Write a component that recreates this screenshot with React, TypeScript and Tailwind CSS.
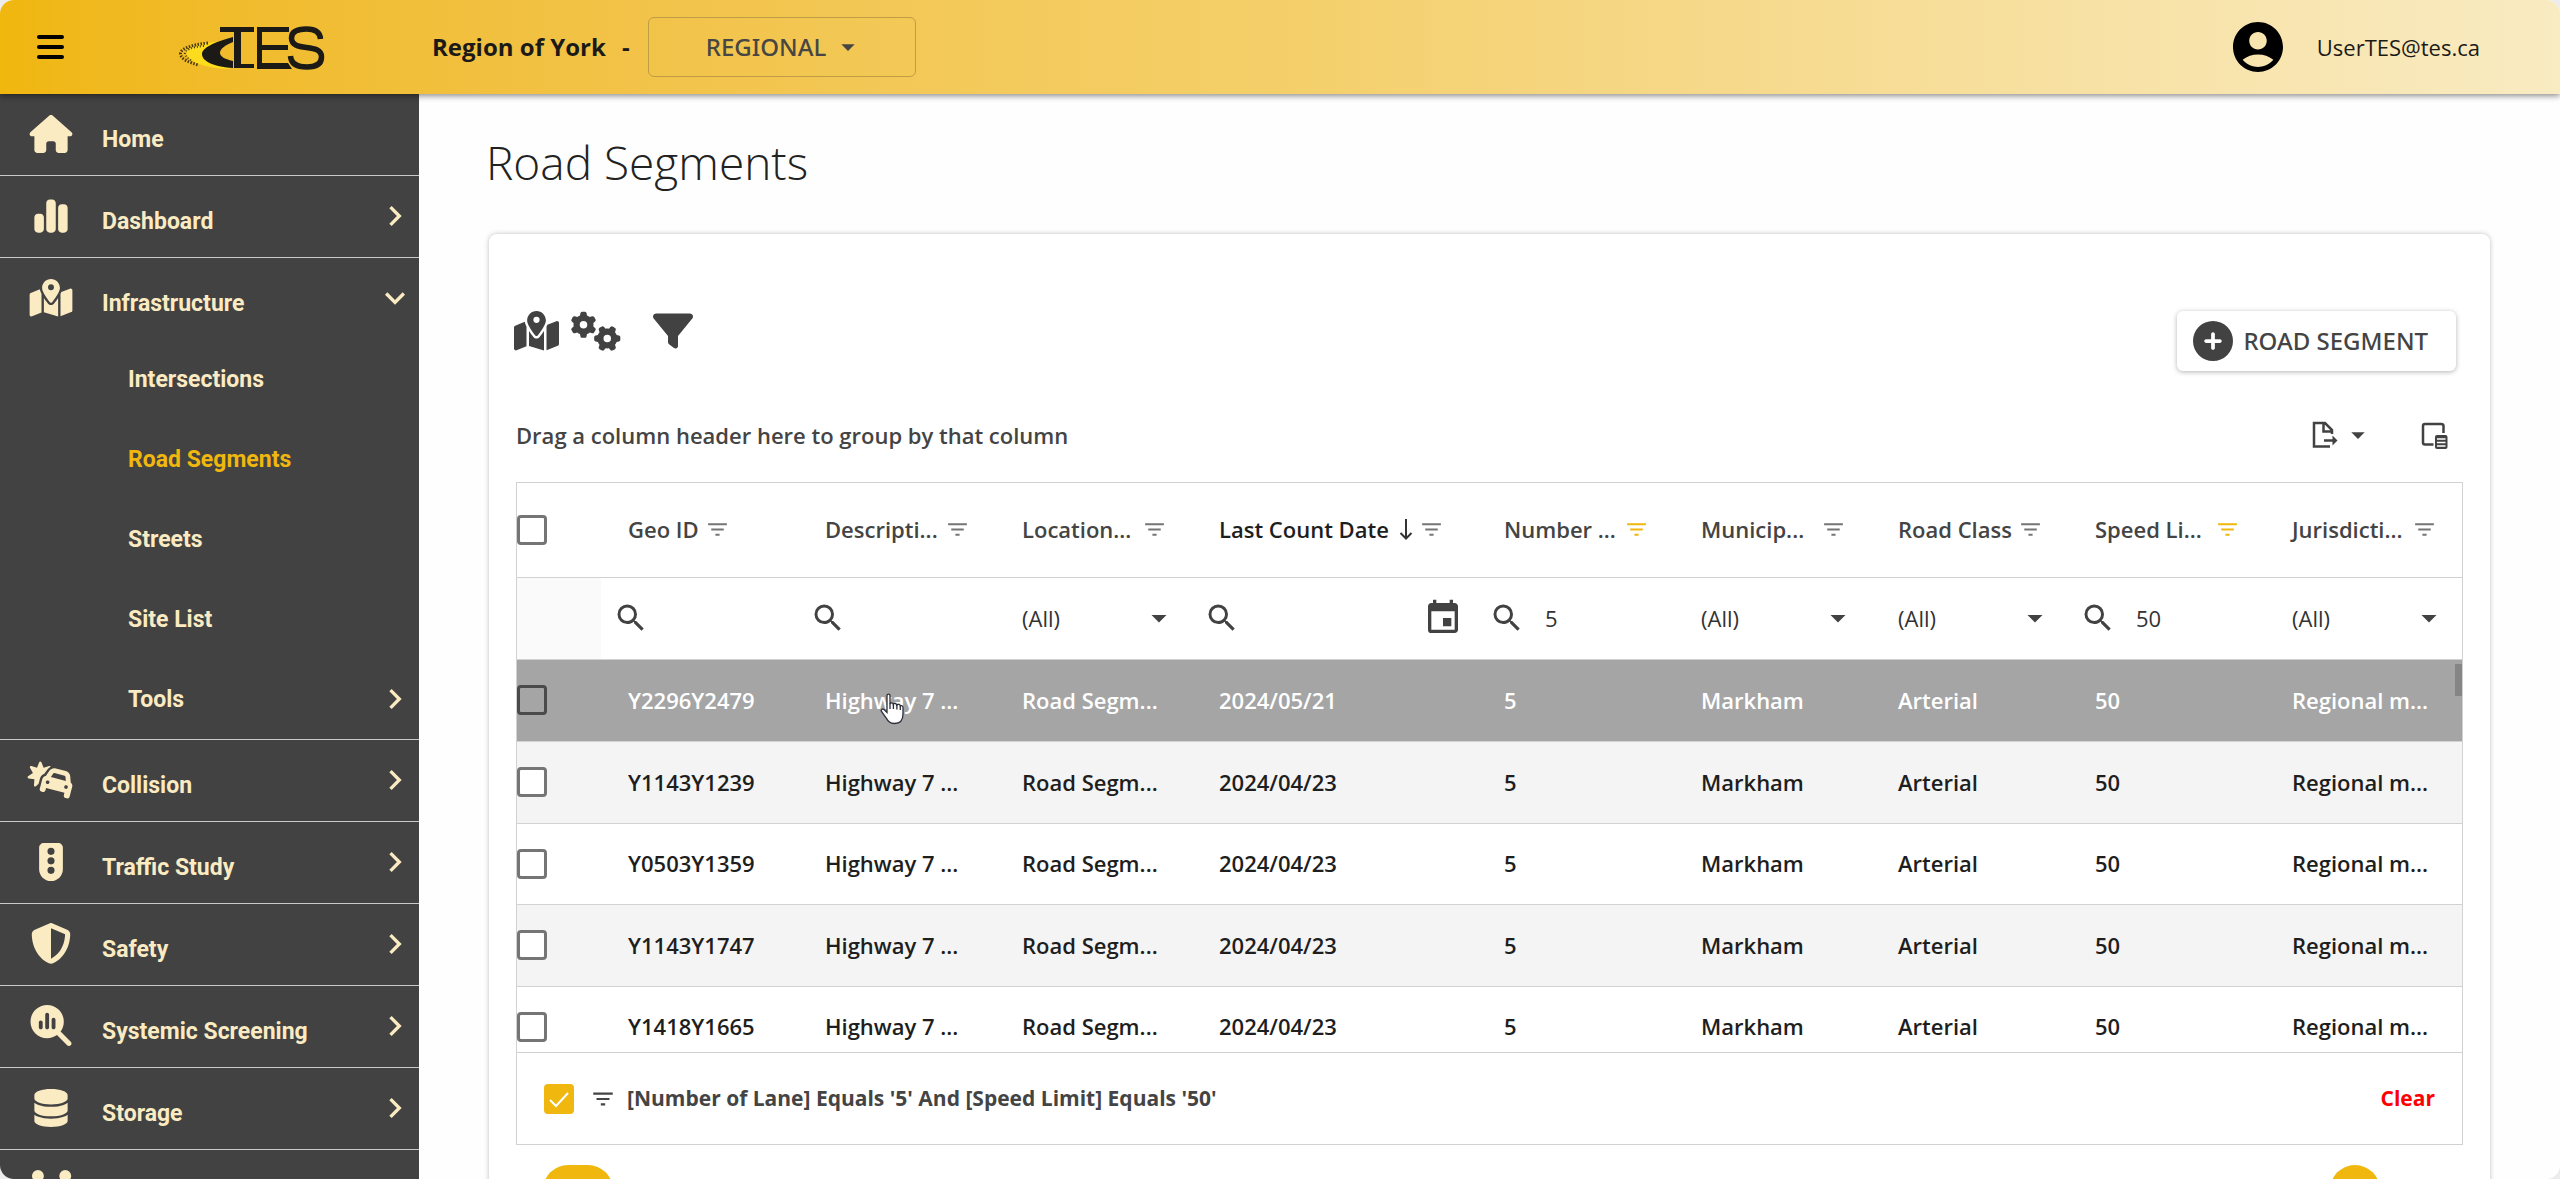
import type { ComponentType, ReactNode } from "react";
import {
  FaCarBurst,
  FaChartSimple,
  FaCirclePlus,
  FaDatabase,
  FaFilter,
  FaGears,
  FaHouse,
  FaMagnifyingGlassChart,
  FaMapLocationDot,
  FaShieldHalved,
  FaTrafficLight,
  FaUsers,
} from "react-icons/fa6";
import {
  MdAccountCircle,
  MdArrowDropDown,
  MdChevronRight,
  MdEvent,
  MdFilterList,
  MdKeyboardArrowDown,
  MdSearch,
} from "react-icons/md";

type IconType = ComponentType<{ className?: string }>;
type NavEntry = { label: string; icon: IconType; chevron?: "right" | "down"; large?: boolean };

const home: NavEntry = { label: "Home", icon: FaHouse };
const dashboard: NavEntry = { label: "Dashboard", icon: FaChartSimple, chevron: "right" };
const infrastructure: NavEntry = { label: "Infrastructure", icon: FaMapLocationDot, chevron: "down" };

const infrastructurePages = ["Intersections", "Road Segments", "Streets", "Site List", "Tools"];

const navBottom: NavEntry[] = [
  { label: "Collision", icon: FaCarBurst, chevron: "right" },
  { label: "Traffic Study", icon: FaTrafficLight, chevron: "right" },
  { label: "Safety", icon: FaShieldHalved, chevron: "right", large: true },
  { label: "Systemic Screening", icon: FaMagnifyingGlassChart, chevron: "right", large: true },
  { label: "Storage", icon: FaDatabase, chevron: "right" },
];

type Column = {
  label: string;
  short: string;
  kind: "search" | "select" | "date";
  value?: string;
  active?: boolean;
};

const columns: Column[] = [
  { label: "Geo ID", short: "Geo ID", kind: "search" },
  { label: "Description", short: "Descripti...", kind: "search" },
  { label: "Location Type", short: "Location...", kind: "select" },
  { label: "Last Count Date", short: "Last Count Date", kind: "date" },
  { label: "Number of Lane", short: "Number ...", kind: "search", value: "5", active: true },
  { label: "Municipality", short: "Municip...", kind: "select" },
  { label: "Road Class", short: "Road Class", kind: "select" },
  { label: "Speed Limit", short: "Speed Li...", kind: "search", value: "50", active: true },
  { label: "Jurisdiction", short: "Jurisdicti...", kind: "select" },
];

const rows = [
  ["Y2296Y2479", "2024/05/21"],
  ["Y1143Y1239", "2024/04/23"],
  ["Y0503Y1359", "2024/04/23"],
  ["Y1143Y1747", "2024/04/23"],
  ["Y1418Y1665", "2024/04/23"],
].map(([id, date]) => [
  id,
  "Highway 7 ...",
  "Road Segm...",
  date,
  "5",
  "Markham",
  "Arterial",
  "50",
  "Regional m...",
]);

function Logo() {
  return (
    <svg viewBox="0 0 165 60" className="h-[60px] w-[165px]" role="img" aria-label="TES">
      <path d="M44 25 C24 27 15 32 17 38 C20 45 34 51 60 52 L58 50 C40 48 31 43 32 37 C33 32 42 27 54 24 Z" fill="#fcdc1c" />
      <path d="M38 26 C20 28 10 32 10.500 37 C11 42 18 45 28 48" fill="none" stroke="#4a3b0b" strokeWidth="3" strokeDasharray="1.5 1.5" />
      <path d="M34 29 C22 30 14 33 15 37 C16 40 18 42 23 44" fill="none" stroke="#4a3b0b" strokeWidth="2" strokeDasharray="1 2" />
      <path d="M63 20 C44 25 32 31 32 37 C32 45 46 50 63 51 L63 44 C54 42 50 39 50 36 C50 32 55 28 63 25 Z" fill="#1c1a17" />
      <path d="M50 10 H84 V15 H71 V47 H84 V51 H64 V15 H50 Z" fill="#1c1a17" />
      <path d="M87 10 H119 V15 H92 V28 H118 V33 H92 V46 H118 L122 52 H87 Z" fill="#1c1a17" />
      <path d="M150.500 22 C150 14.500 144.500 12 136.500 12 C127 12 121.500 15 121.500 21 C121.500 36 151.500 25 151.500 40 C151.500 47 146 50 137 50 C127 50 121 47 120.500 39" fill="none" stroke="#1c1a17" strokeWidth="5.500" />
    </svg>
  );
}

function Chevron({ dir }: { dir: "right" | "down" }) {
  return dir === "right" ? (
    <MdChevronRight className="size-10 shrink-0" />
  ) : (
    <MdKeyboardArrowDown className="size-10 shrink-0" />
  );
}

function NavItem({ label, icon: Icon, chevron, large }: NavEntry) {
  return (
    <button type="button" className="flex h-[81px] w-full items-center pr-1 pb-0.5 pl-[27px] text-left">
      <Icon className={large ? "h-[41px] w-12 shrink-0" : "h-[38px] w-12 shrink-0"} />
      <span className="ml-[27px] flex-1 pt-3.5">{label}</span>
      {chevron && <Chevron dir={chevron} />}
    </button>
  );
}

function Sidebar() {
  return (
    <nav
      aria-label="Main"
      className="w-[419px] shrink-0 overflow-hidden bg-[#424242] font-['Roboto',sans-serif] text-[23px] font-bold text-[#faebc3]"
    >
      <NavItem {...home} />
      <div className="border-t border-[#c9c9c9]">
        <NavItem {...dashboard} />
      </div>
      <div className="border-t border-[#c9c9c9]">
        <NavItem {...infrastructure} />
        <ul>
          {infrastructurePages.map((label) => (
            <li key={label}>
              <a
                href="#"
                className={
                  label === "Road Segments"
                    ? "flex h-20 items-center pr-1 pl-32 text-[#f0b70e]"
                    : "flex h-20 items-center pr-1 pl-32"
                }
              >
                <span className="flex-1 pt-0.5">{label}</span>
                {label === "Tools" && <Chevron dir="right" />}
              </a>
            </li>
          ))}
        </ul>
      </div>
      {navBottom.map((item) => (
        <div key={item.label} className="border-t border-[#c9c9c9]">
          <NavItem {...item} />
        </div>
      ))}
      <button
        type="button"
        aria-label="Users"
        className="flex h-[81px] w-full items-center border-t border-[#c9c9c9] pb-0.5 pl-[27px]"
      >
        <FaUsers className="h-[38px] w-12" />
      </button>
    </nav>
  );
}

function TopBar() {
  return (
    <header className="relative z-10 flex h-[94px] shrink-0 items-center bg-linear-to-r from-[#f0b70e] via-[#f4cf69] to-[#f9ebc2] text-[#1c1a17] shadow-[0_2px_6px_rgba(0,0,0,0.45)]">
      <button type="button" aria-label="Menu" className="ml-[37px] flex w-[27px] flex-col gap-1.5">
        <span className="h-1 rounded-full bg-black" />
        <span className="h-1 rounded-full bg-black" />
        <span className="h-1 rounded-full bg-black" />
      </button>
      <a href="#" className="ml-[106px]">
        <Logo />
      </a>
      <p className="ml-[97px] w-[216px] text-2xl font-bold">
        Region of York <span className="ml-2.5">-</span>
      </p>
      <button
        type="button"
        className="flex h-[60px] w-[268px] items-center justify-center gap-1.5 rounded-md border border-[#bf9d45] pl-1.5 font-['Noto_Sans',sans-serif] text-2xl font-medium text-[#484643]"
      >
        REGIONAL
        <MdArrowDropDown className="size-8" />
      </button>
      <div className="mr-[80px] ml-auto flex items-center gap-[29px]">
        <MdAccountCircle className="size-[60px] text-black" />
        <span className="text-[22px]">UserTES@tes.ca</span>
      </div>
    </header>
  );
}

const checkboxClass =
  "block size-[30px] cursor-pointer appearance-none rounded-[4px] border-3 border-[#757575] bg-white";

function FilterCell({ col }: { col: Column }) {
  if (col.kind === "select") {
    return (
      <div className="relative flex items-center pl-[27px]">
        <select
          aria-label={`Filter ${col.label}`}
          className="w-full appearance-none bg-transparent text-[22px] text-[#333]"
        >
          <option>(All)</option>
        </select>
        <MdArrowDropDown className="pointer-events-none absolute right-[15px] size-9 text-[#424242]" />
      </div>
    );
  }
  return (
    <label className="flex items-center pl-3">
      <MdSearch className="size-9 shrink-0 text-[#424242]" />
      <input
        type="text"
        aria-label={`Filter ${col.label}`}
        defaultValue={col.value}
        className="ml-5 w-0 min-w-0 flex-1 bg-transparent text-[22px] text-[#333] outline-none"
      />
      {col.kind === "date" && (
        <button type="button" aria-label="Open calendar" className="mr-3.5 shrink-0">
          <MdEvent className="size-10 text-[#424242]" />
        </button>
      )}
    </label>
  );
}

function HandCursor() {
  return (
    <svg viewBox="0 0 24 32" className="pointer-events-none absolute top-[33px] left-[82px] h-8 w-6" aria-hidden="true">
      <path
        d="M7 2.500 C7 .6 10 .6 10 2.500 V11 C10.500 9.500 13 9.700 13.300 11.200 C14 10 16.500 10.300 16.800 12 C17.600 11 20 11.300 20.300 13 C21.500 12 23 12.800 23 14.500 V21 C23 27 20 30.500 14.500 30.500 C9.500 30.500 8 28 5.500 24 L1.500 18.500 C.5 16.800 2.500 15.300 4 16.500 L7 19.500 Z"
        fill="#fff"
        stroke="#2d2d3a"
        strokeWidth="1.300"
      />
      <path d="M10 10.500 V16 M13.400 11 V16 M16.900 12 V16.500 M20.300 13 V17" stroke="#2d2d3a" strokeWidth="1.300" />
    </svg>
  );
}

function Grid() {
  return (
    <section className="mx-[27px] mt-6 border border-[#d2d2d2]">
      <div className="relative h-[569px] overflow-hidden">
        <table className="w-full table-fixed border-collapse text-left whitespace-nowrap">
          <colgroup>
            <col className="w-[84px]" />
            {columns.map((c) => (
              <col key={c.label} className={c.kind === "date" ? "w-[285px]" : ""} />
            ))}
          </colgroup>
          <thead>
            <tr className="h-[94px] border-b border-[#d2d2d2]">
              <th className="p-0">
                <input type="checkbox" aria-label="Select all rows" className={checkboxClass} />
              </th>
              {columns.map((c) => (
                <th key={c.label} className="p-0 pl-[27px] font-semibold text-[#444]">
                  <span className="flex items-center">
                    <button
                      type="button"
                      className={
                        c.kind === "date"
                          ? "mr-2.5 text-[#1e1e1e]"
                          : c.short.endsWith("...")
                            ? "w-[120px] text-left"
                            : "mr-1.5"
                      }
                    >
                      {c.short}
                    </button>
                    {c.kind === "date" && (
                      <svg viewBox="0 0 14 22" className="mr-1.5 h-[22px] w-3.5" fill="none" stroke="#333" strokeWidth="2">
                        <path d="M7 0 V19 M1.500 14 L7 19.500 L12.500 14" />
                      </svg>
                    )}
                    <button type="button" aria-label={`Filter ${c.label}`}>
                      <MdFilterList className={c.active ? "size-[25px] text-[#f0b70e]" : "size-[25px] text-[#757575]"} />
                    </button>
                  </span>
                </th>
              ))}
            </tr>
            <tr className="h-[82px] border-b border-[#d2d2d2]">
              <td className="bg-[#fafafa] p-0" />
              {columns.map((c) => (
                <td key={c.label} className="p-0">
                  <FilterCell col={c} />
                </td>
              ))}
            </tr>
          </thead>
          <tbody>
            {rows.map((row, i) => (
              <tr
                key={row[0]}
                className={
                  i === 0
                    ? "h-[82px] border-b border-[#d2d2d2] bg-[#a5a5a5] text-white"
                    : i % 2 === 1
                      ? "h-[82px] border-b border-[#d2d2d2] bg-[#f4f4f4] text-[#1e1e1e]"
                      : "h-[81px] border-b border-[#d2d2d2] text-[#1e1e1e]"
                }
              >
                <td className="p-0">
                  <input
                    type="checkbox"
                    aria-label={`Select ${row[0]}`}
                    className={
                      i === 0
                        ? "block size-[30px] cursor-pointer appearance-none rounded-[4px] border-3 border-[#4a4a4a] bg-transparent"
                        : checkboxClass
                    }
                  />
                </td>
                {row.map((cell, j) => (
                  <td key={columns[j].label} className="relative p-0 pl-[27px] font-semibold">
                    {cell}
                    {i === 0 && j === 1 && <HandCursor />}
                  </td>
                ))}
              </tr>
            ))}
          </tbody>
        </table>
        <div className="absolute top-[181px] right-0 h-8 w-[7px] bg-[#858585]" />
      </div>
      <div className="flex h-[92px] items-center border-t border-[#d2d2d2] pr-[27px] pl-[27px] text-[21px] font-bold">
        <span className="relative flex size-[30px] items-center justify-center">
          <input
            type="checkbox"
            defaultChecked
            aria-label="Enable filter"
            className="size-[30px] appearance-none rounded-[4px] bg-[#f0b70e]"
          />
          <svg viewBox="0 0 30 30" className="pointer-events-none absolute inset-0" fill="none" stroke="#fff" strokeWidth="2">
            <path d="M6 16 L12 22 L24 9" />
          </svg>
        </span>
        <MdFilterList className="mr-[5px] ml-4 size-[26px] text-[#444]" />
        <a href="#" className="ml-1.5 text-[#444]">
          [Number of Lane] Equals &apos;5&apos; And [Speed Limit] Equals &apos;50&apos;
        </a>
        <button type="button" className="ml-auto text-[#f00]">
          Clear
        </button>
      </div>
    </section>
  );
}

function IconButton({ label, children }: { label: string; children: ReactNode }) {
  return (
    <button type="button" aria-label={label} className="flex items-center text-[#424242]">
      {children}
    </button>
  );
}

function Card() {
  return (
    <div className="mx-[70px] rounded-lg bg-white pt-[77px] shadow-[0_0_5px_rgba(0,0,0,0.25)]">
      <div className="flex items-start justify-between pr-[34px] pl-[25px]">
        <div className="flex items-center">
          <IconButton label="Show on map">
            <FaMapLocationDot className="h-10 w-[45px]" />
          </IconButton>
          <span className="ml-3">
            <IconButton label="Settings">
              <FaGears className="h-10 w-[50px]" />
            </IconButton>
          </span>
          <span className="ml-8">
            <IconButton label="Filter">
              <FaFilter className="size-10" />
            </IconButton>
          </span>
        </div>
        <button
          type="button"
          className="flex h-[60px] items-center gap-2.5 rounded-md bg-white pr-7 pl-4 font-['Noto_Sans',sans-serif] text-2xl font-medium text-[#444] shadow-[0_1px_5px_rgba(0,0,0,0.3)]"
        >
          <FaCirclePlus className="size-10 text-[#424242]" />
          ROAD SEGMENT
        </button>
      </div>
      <div className="mt-[41px] flex h-[46px] items-center justify-between pr-[42px] pl-[27px]">
        <p className="font-semibold text-[#444]">Drag a column header here to group by that column</p>
        <div className="flex items-center gap-[46px]">
          <IconButton label="Export">
            <svg viewBox="0 0 26 28" className="h-7 w-[26px]" fill="none" stroke="currentColor" strokeWidth="2.500">
              <path d="M18 25.500 H2 V2 H13 L20 9 V13 M11.500 2 V10.500 H20 M12 19.500 H21" />
              <path d="M20.500 14.500 L25.500 19.500 L20.500 24.500 Z" fill="currentColor" stroke="none" />
            </svg>
            <MdArrowDropDown className="ml-1 size-8" />
          </IconButton>
          <IconButton label="Column chooser">
            <svg viewBox="0 0 28 28" className="size-7" fill="none" stroke="currentColor" strokeWidth="2.500">
              <path d="M13.500 23.500 H5 Q3 23.500 3 21.500 V5 Q3 3 5 3 H21 Q23.500 3 23.500 5 V12" />
              <rect x="15" y="14" width="12.500" height="14" rx="2" fill="currentColor" stroke="none" />
              <path d="M17 18 H25.500 M17 21.500 H25.500 M17 25 H25.500" stroke="#fff" strokeWidth="1.300" />
            </svg>
          </IconButton>
        </div>
      </div>
      <Grid />
      <div className="mx-[27px] flex justify-between px-[27px] pt-5 pb-8">
        <button type="button" aria-label="Page size" className="h-[50px] w-[70px] rounded-full bg-[#f0b70e]" />
        <button type="button" aria-label="Current page" className="mr-[56px] size-[50px] rounded-full bg-[#f0b70e]" />
      </div>
    </div>
  );
}

export default function App() {
  return (
    <div className="h-screen bg-[#ececec]">
      <div className="flex h-full flex-col overflow-hidden rounded-[14px] bg-[#fefefe] font-['Open_Sans','Noto_Sans',sans-serif] text-[22px]">
        <TopBar />
        <div className="flex min-h-0 flex-1">
          <Sidebar />
          <main className="min-w-0 flex-1">
            <h1 className="mt-[38px] mb-[42px] ml-[67px] text-[46px] leading-[60px] font-light text-[#222]">
              Road Segments
            </h1>
            <Card />
          </main>
        </div>
      </div>
    </div>
  );
}
